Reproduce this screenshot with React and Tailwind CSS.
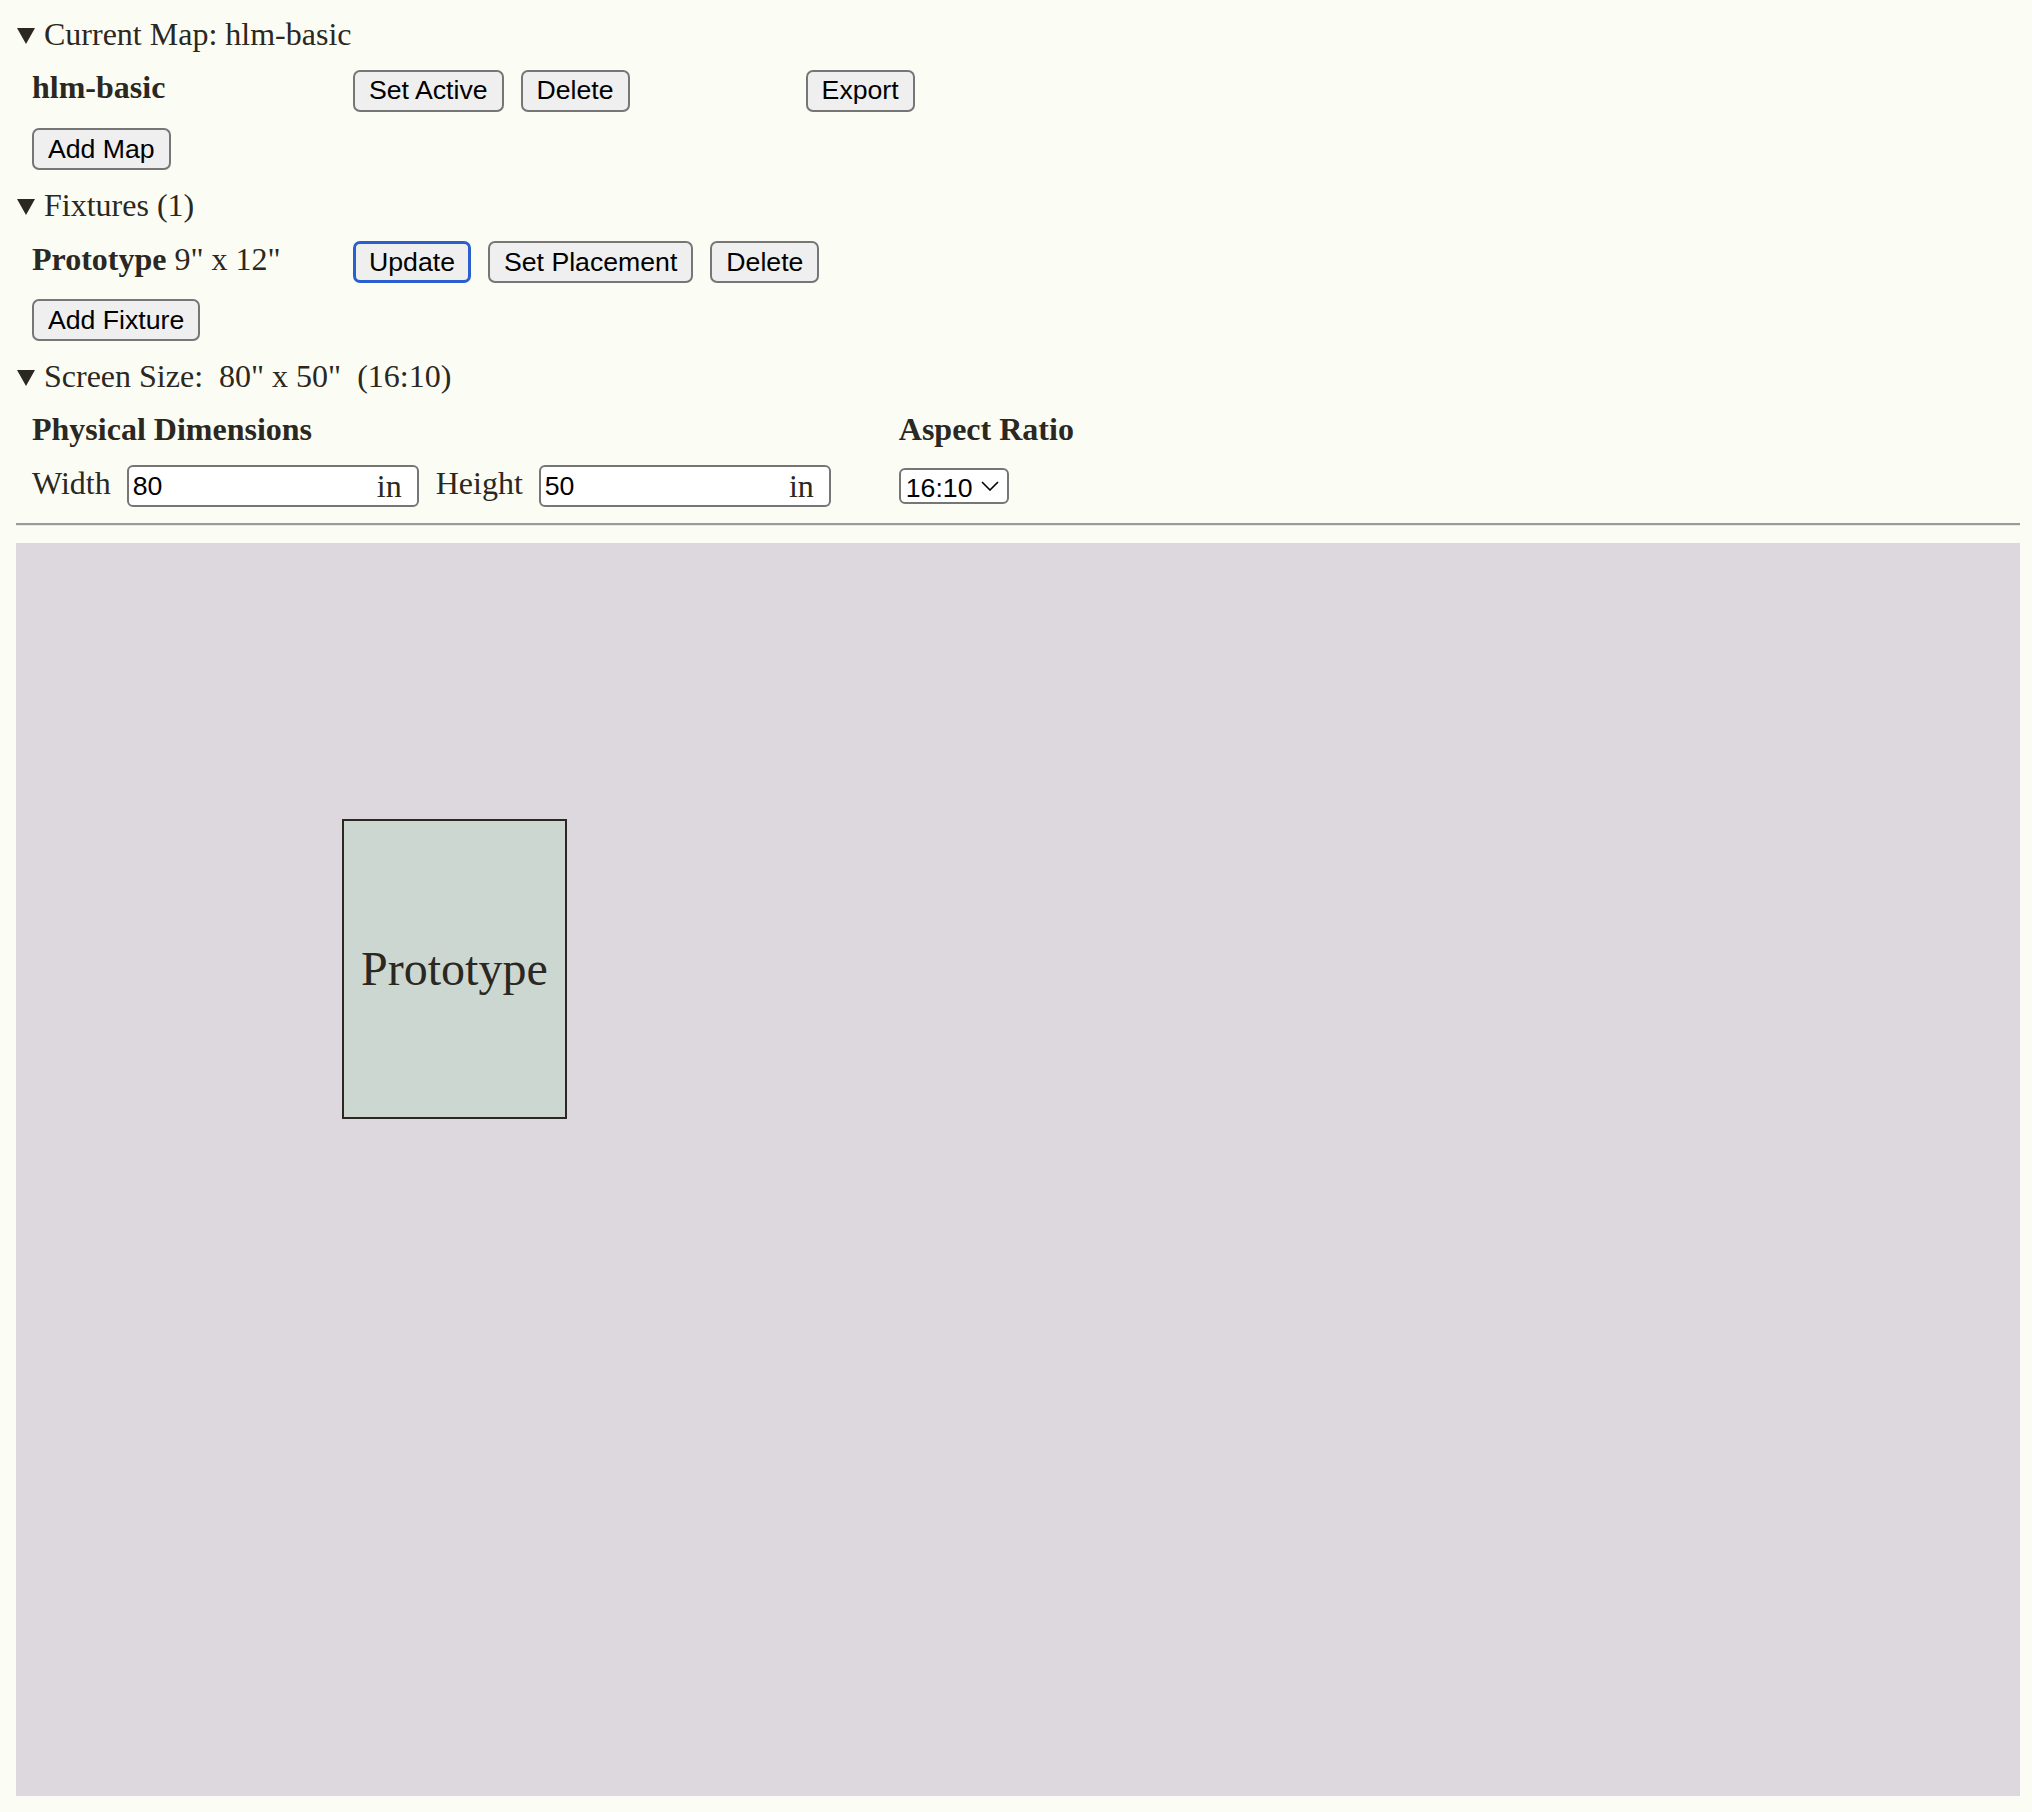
import { useState } from "react";

const screen = { width: 80, height: 50, ratio: "16:10" };

const fixtures = [{ id: 1, name: "Prototype", width: 9, height: 12, x: 13, y: 11 }];

const CANVAS_W = 2004;
const CANVAS_H = (CANVAS_W * screen.height) / screen.width;

function Btn({ children, focused }) {
  return (
    <button
      type="button"
      className={`h-[42px] rounded-[7px] bg-[#efefef] font-['Liberation_Sans',Arial,sans-serif] text-[26.67px] leading-none text-black ${
        focused ? "border-[3px] border-[#2b5fd0] px-[13px]" : "border-2 border-[#767676] px-[14px]"
      }`}
    >
      {children}
    </button>
  );
}

function Triangle() {
  return (
    <svg width="18" height="16" viewBox="0 0 18 16" className="mt-[2px] shrink-0">
      <polygon points="0,0 18,0 9,16" fill="#2b2721" />
    </svg>
  );
}

function Section({ title, children }) {
  return (
    <details open>
      <summary className="flex h-[37px] cursor-pointer list-none items-center gap-[9px] pl-[1px] [&::-webkit-details-marker]:hidden">
        <Triangle />
        <span className="whitespace-pre">{title}</span>
      </summary>
      {children}
    </details>
  );
}

function UnitInput({ value }) {
  return (
    <div className="relative">
      <input
        defaultValue={value}
        className="h-[42px] w-[292px] rounded-[6px] border-2 border-[#767676] bg-white pl-[4px] font-['Liberation_Sans',Arial,sans-serif] text-[26.67px] text-black outline-none"
      />
      <span className="absolute right-[17px] top-1/2 -translate-y-1/2 leading-[37px]">in</span>
    </div>
  );
}

export default function App() {
  const [maps] = useState(["hlm-basic"]);

  return (
    <div className="min-h-screen bg-[#fbfdf5] p-4 font-['Liberation_Serif','Times_New_Roman',serif] text-[32px] leading-[37px] text-[#2b2721]">
      <Section title={`Current Map: ${maps[0]}`}>
        <div className="mt-4 flex h-[43px] items-center pl-4">
          <span className="mb-[6px] w-[321px] font-bold">{maps[0]}</span>
          <div className="flex gap-[17px]">
            <Btn>Set Active</Btn>
            <Btn>Delete</Btn>
          </div>
          <div className="ml-[176px]">
            <Btn>Export</Btn>
          </div>
        </div>
        <div className="mt-4 pl-4">
          <Btn>Add Map</Btn>
        </div>
      </Section>

      <div className="mt-[17px]">
        <Section title={`Fixtures (${fixtures.length})`}>
          {fixtures.map((f) => (
            <div key={f.id} className="mt-[17px] flex h-[42px] items-center pl-4">
              <span className="mb-[6px] w-[321px]">
                <b>{f.name}</b> {f.width}" x {f.height}"
              </span>
              <div className="flex gap-[17px]">
                <Btn focused>Update</Btn>
                <Btn>Set Placement</Btn>
                <Btn>Delete</Btn>
              </div>
            </div>
          ))}
          <div className="mt-4 pl-4">
            <Btn>Add Fixture</Btn>
          </div>
        </Section>
      </div>

      <div className="mt-[17px]">
        <Section title={`Screen Size:  ${screen.width}" x ${screen.height}"  (${screen.ratio})`}>
          <div className="mt-4 flex pl-4">
            <div>
              <h3 className="font-bold">Physical Dimensions</h3>
              <div className="mt-[17px] flex h-[42px] items-center gap-4">
                <span className="mb-[5px]">Width</span>
                <UnitInput value={screen.width} />
                <span className="mb-[5px] ml-[1px]">Height</span>
                <UnitInput value={screen.height} />
              </div>
            </div>
            <div className="ml-[68px]">
              <h3 className="font-bold">Aspect Ratio</h3>
              <div className="mt-[17px] flex h-[42px] items-center">
                <div className="relative">
                  <select
                    defaultValue={screen.ratio}
                    className="h-[36px] w-[110px] appearance-none rounded-[6px] border-2 border-[#767676] bg-white pl-[5px] font-['Liberation_Sans',Arial,sans-serif] text-[26.67px] text-black outline-none"
                  >
                    <option>16:10</option>
                    <option>16:9</option>
                    <option>4:3</option>
                  </select>
                  <svg
                    width="18"
                    height="10"
                    viewBox="0 0 18 10"
                    className="pointer-events-none absolute right-[10px] top-1/2 -translate-y-1/2"
                  >
                    <polyline points="1,1 9,9 17,1" fill="none" stroke="#000" strokeWidth="1.6" />
                  </svg>
                </div>
              </div>
            </div>
          </div>
        </Section>
      </div>

      <div className="w-[2004px]">
        <hr className="mt-4 h-[3px] border-0 border-t-2 border-b border-t-[#9a9a9a] border-b-[#e8e8e8]" />
        <div className="relative mt-[17px] bg-[#dcd8de]" style={{ height: CANVAS_H }}>
          {fixtures.map((f) => (
            <div
              key={f.id}
              className="absolute flex items-center justify-center border-2 border-[#2b2721] bg-[#ccd7d2] text-[48px] leading-none"
              style={{
                left: (f.x / screen.width) * CANVAS_W,
                top: (f.y / screen.height) * CANVAS_H,
                width: (f.width / screen.width) * CANVAS_W,
                height: (f.height / screen.height) * CANVAS_H,
              }}
            >
              {f.name}
            </div>
          ))}
        </div>
      </div>
    </div>
  );
}
